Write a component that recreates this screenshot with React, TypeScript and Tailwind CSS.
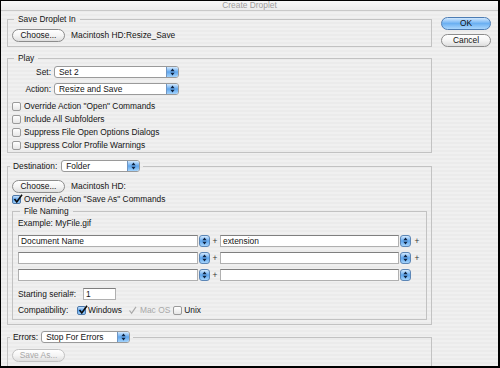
import React from "react";

const T = "text-[8.4px] leading-[11px] text-[#141414]";

function Arrows() {
  return (
    <svg width="5" height="8" viewBox="0 0 5 8">
      <path d="M2.5 0.6 L4.6 3.2 H0.4Z M2.5 7.4 L4.6 4.8 H0.4Z" fill="#0f2340" />
    </svg>
  );
}

function Popup({ label, w }: { label: string; w: string }) {
  return (
    <div className={`flex h-[12px] ${w} rounded-[3px] border border-[#9a9a9a] bg-white overflow-hidden`}>
      <div className={`flex-1 pl-[4px] text-[8.4px] leading-[10px] text-[#141414]`}>{label}</div>
      <div className="w-[12px] flex items-center justify-center bg-gradient-to-b from-[#d3e9fd] via-[#5ea6ee] to-[#a4d3fb] border-l border-[#6f95c2]">
        <Arrows />
      </div>
    </div>
  );
}

function ComboBtn() {
  return (
    <div className="w-[11px] h-[12px] rounded-[3px] border border-[#5c86b6] bg-gradient-to-b from-[#d3e9fd] via-[#5ea6ee] to-[#a4d3fb] flex items-center justify-center">
      <Arrows />
    </div>
  );
}

function Field({ w, text }: { w: string; text?: string }) {
  return (
    <div className={`h-[12px] ${w} bg-white border border-[#b0b0b0] border-t-[#7f7f7f] pl-[2px] text-[8.4px] leading-[10px] text-[#141414]`}>
      {text}
    </div>
  );
}

function Button({ label, w, disabled }: { label: string; w: string; disabled?: boolean }) {
  return (
    <div
      className={`h-[13px] ${w} rounded-full border ${disabled ? "border-[#c2c2c2] text-[#a8a8a8]" : "border-[#8c8c8c] text-[#141414]"} bg-gradient-to-b from-white via-[#f4f4f4] to-[#dedede] flex items-center justify-center text-[8.4px] leading-[11px]`}
    >
      {label}
    </div>
  );
}

function Check({ checked, disabled }: { checked?: boolean; disabled?: boolean }) {
  if (disabled) {
    return (
      <div className="w-[9px] h-[9px] flex items-center justify-center">
        <svg width="9" height="9" viewBox="0 0 9 9">
          <path d="M1.5 4.5 L3.6 7.3 L8 0.8" stroke="#a9a9a9" strokeWidth="1.2" fill="none" />
        </svg>
      </div>
    );
  }
  if (checked) {
    return (
      <div className="w-[9px] h-[9px] rounded-[2px] border border-[#4c77a8] bg-gradient-to-b from-[#c9e3fc] via-[#5aa2ec] to-[#9fd0fa] relative">
        <svg width="10" height="10" viewBox="0 0 10 10" className="absolute left-[0px] top-[-2px]">
          <path d="M1.5 5 L3.8 8 L9 0.8" stroke="#0b0b0b" strokeWidth="1.6" fill="none" />
        </svg>
      </div>
    );
  }
  return <div className="w-[9px] h-[9px] rounded-[2px] border border-[#9a9a9a] bg-gradient-to-b from-white to-[#e6e6e6]" />;
}

function CheckRow({ label, checked }: { label: string; checked?: boolean }) {
  return (
    <div className="h-[13px] flex items-center gap-[3px]">
      <Check checked={checked} />
      <span className={T}>{label}</span>
    </div>
  );
}

export default function App() {
  return (
    <div className="w-[500px] h-[368px] bg-black pt-[1px] pl-[1px] pr-[2px] pb-[2px] font-['Liberation_Sans',Arial,sans-serif]">
      <div className="w-[497px] h-[365px] flex flex-col overflow-hidden">
        <div className="h-[10px] shrink-0 bg-gradient-to-b from-[#f7f7f7] to-[#ebebeb] border-b border-[#c9c9c9] flex items-center justify-center">
          <span className="text-[8.4px] leading-[9px] text-[#9d9d9d]">Create Droplet</span>
        </div>
        <div className="flex-1 flex bg-[repeating-linear-gradient(0deg,#f0f0f0_0px,#f0f0f0_2px,#ebebeb_2px,#ebebeb_4px)] overflow-hidden">
          {/* Left column */}
          <div className="w-[431px] pl-[6px] flex flex-col shrink-0">
            {/* Save Droplet In */}
            <fieldset className="mt-[3px] w-[425px] border border-[#c2c2c2]">
              <legend className={`ml-[6px] px-[4px] ${T}`}>Save Droplet In</legend>
              <div className="pt-[4px] pb-[4px] pl-[4px] flex items-center gap-[6px]">
                <Button label="Choose..." w="w-[53px]" />
                <span className={T}>Macintosh HD:Resize_Save</span>
              </div>
            </fieldset>

            {/* Play */}
            <fieldset className="mt-[6px] w-[425px] border border-[#c2c2c2]">
              <legend className={`ml-[6px] px-[4px] ${T}`}>Play</legend>
              <div className="pt-[2px] flex flex-col gap-[5px]">
                <div className="flex items-center">
                  <span className={`w-[43px] text-right ${T}`}>Set:</span>
                  <div className="ml-[3px]">
                    <Popup label="Set 2" w="w-[125px]" />
                  </div>
                </div>
                <div className="flex items-center">
                  <span className={`w-[43px] text-right ${T}`}>Action:</span>
                  <div className="ml-[3px]">
                    <Popup label="Resize and Save" w="w-[125px]" />
                  </div>
                </div>
              </div>
              <div className="mt-[5px] pl-[4px] flex flex-col">
                <CheckRow label={'Override Action "Open" Commands'} />
                <CheckRow label="Include All Subfolders" />
                <CheckRow label="Suppress File Open Options Dialogs" />
                <CheckRow label="Suppress Color Profile Warnings" />
              </div>
            </fieldset>

            {/* Destination */}
            <fieldset className="mt-[7px] w-[425px] border border-[#c2c2c2]">
              <legend className="ml-[2px] px-[3px]">
                <div className="flex items-center gap-[4px]">
                  <span className={T}>Destination:</span>
                  <Popup label="Folder" w="w-[79px]" />
                </div>
              </legend>
              <div className="pt-[8px] px-[4px] pb-[4px] flex flex-col">
                <div className="flex items-center gap-[6px]">
                  <Button label="Choose..." w="w-[53px]" />
                  <span className={T}>Macintosh HD:</span>
                </div>
                <CheckRow label={'Override Action "Save As" Commands'} checked />
                <fieldset className="w-[415px] border border-[#c2c2c2]">
                  <legend className={`ml-[7px] px-[4px] ${T}`}>File Naming</legend>
                  <div className="pl-[5px] pb-[3px] flex flex-col">
                    <div className={`h-[12px] flex items-center ${T}`}>Example: MyFile.gif</div>
                    <div className="mt-[6px] flex flex-col gap-[5px]">
                      {[0, 1, 2].map((i) => (
                        <div key={i} className="flex items-center">
                          <Field w="w-[180px]" text={i === 0 ? "Document Name" : ""} />
                          <div className="ml-[1px]">
                            <ComboBtn />
                          </div>
                          <span className="w-[10px] text-center text-[8.4px] leading-[11px] text-[#333]">+</span>
                          <Field w="w-[179px]" text={i === 0 ? "extension" : ""} />
                          <div className="ml-[1px]">
                            <ComboBtn />
                          </div>
                          {i < 2 && (
                            <span className="w-[12px] text-center text-[8.4px] leading-[11px] text-[#333]">+</span>
                          )}
                        </div>
                      ))}
                    </div>
                    <div className="mt-[7px] flex items-center">
                      <span className={`w-[65px] ${T}`}>Starting serial#:</span>
                      <Field w="w-[33px]" text="1" />
                    </div>
                    <div className="mt-[4px] h-[12px] flex items-center">
                      <span className={`w-[59px] ${T}`}>Compatibility:</span>
                      <Check checked />
                      <span className={`ml-[2px] ${T}`}>Windows</span>
                      <div className="ml-[6px]">
                        <Check disabled />
                      </div>
                      <span className="ml-[3px] text-[8.4px] leading-[11px] text-[#a9a9a9]">Mac OS</span>
                      <div className="ml-[3px]">
                        <Check />
                      </div>
                      <span className={`ml-[2px] ${T}`}>Unix</span>
                    </div>
                  </div>
                </fieldset>
              </div>
            </fieldset>

            {/* Errors */}
            <fieldset className="mt-[6px] w-[425px] border border-[#c2c2c2]">
              <legend className="ml-[2px] px-[3px]">
                <div className="flex items-center gap-[3px]">
                  <span className={T}>Errors:</span>
                  <Popup label="Stop For Errors" w="w-[89px]" />
                </div>
              </legend>
              <div className="pt-[6px] pl-[4px] pb-[12px]">
                <Button label="Save As..." w="w-[53px]" disabled />
              </div>
            </fieldset>
          </div>

          {/* Right column */}
          <div className="ml-[9px] w-[50px] pt-[6px] flex flex-col gap-[4px]">
            <div className="h-[13px] w-[50px] rounded-full border border-[#4d7db4] bg-gradient-to-b from-[#d2e8fd] via-[#6bb0f2] to-[#aad6fc] flex items-center justify-center text-[8.4px] leading-[11px] text-[#101010]">
              OK
            </div>
            <Button label="Cancel" w="w-[50px]" />
          </div>
        </div>
      </div>
    </div>
  );
}
